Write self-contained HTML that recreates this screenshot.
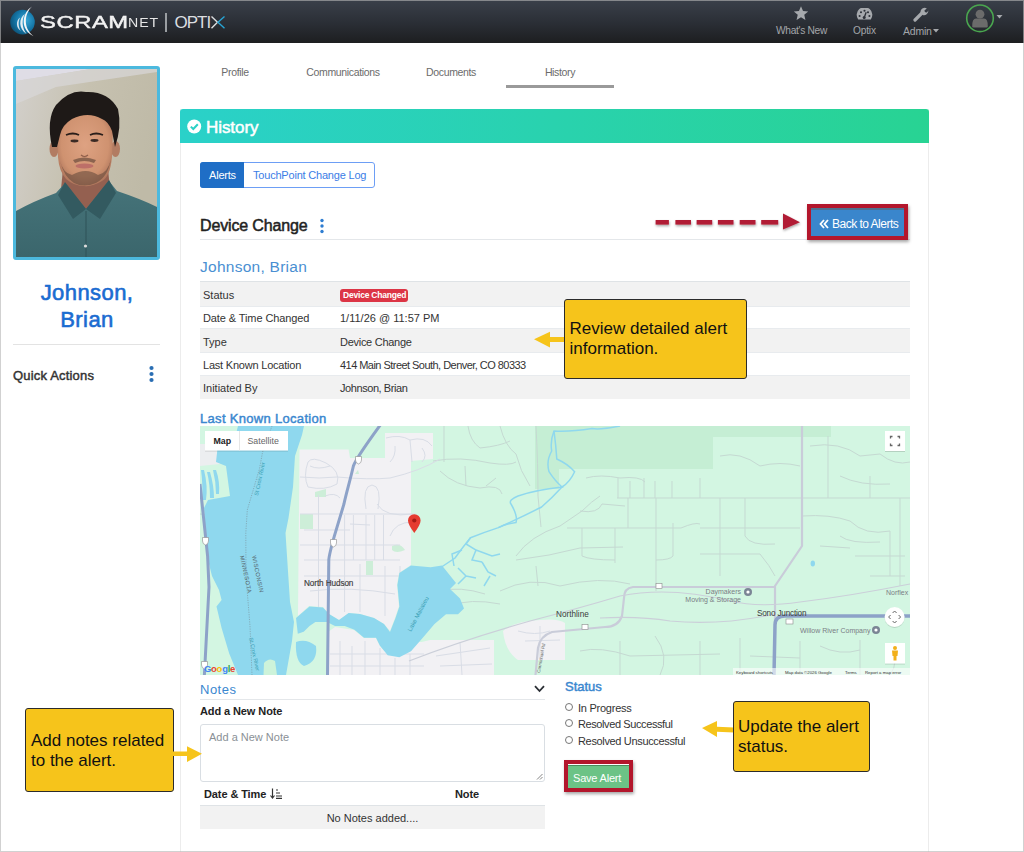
<!DOCTYPE html>
<html><head><meta charset="utf-8">
<style>
*{margin:0;padding:0;box-sizing:border-box}
html,body{width:1024px;height:852px;overflow:hidden;background:#fff;font-family:"Liberation Sans",sans-serif;position:relative}
.a{position:absolute;white-space:nowrap}
#frame{position:absolute;left:0;top:0;width:1024px;height:852px;border:1px solid rgba(180,180,180,0.62);z-index:50}
#hdr{left:0;top:0;width:1024px;height:43px;background:linear-gradient(#3a404a,#2a2e35 55%,#1d1e20)}
.nav{color:#a3a6aa;font-size:11px;line-height:12px}
.tab{color:#6b6b6b;font-size:10.5px;line-height:12px;text-align:center;width:108px;letter-spacing:-0.35px}
.panel{left:180px;top:109px;width:749px;height:760px;border-left:1px solid #ececec;border-right:1px solid #ececec}
.yel{background:#f6c41b;border:1.5px solid #2b2b2b;border-radius:3px;color:#111;font-size:17px;line-height:19.5px;white-space:normal}
.row{position:absolute;left:200px;width:710px;height:23.5px}
.g{background:#f2f2f2}
.lbl{position:absolute;font-size:11px;line-height:12px;color:#333;white-space:nowrap}
.blue{color:#3a87cf}
</style></head><body>
<div id="frame"></div>

<!-- HEADER -->
<div class="a" id="hdr"></div>
<svg class="a" style="left:8px;top:5px" width="32" height="34" viewBox="0 0 32 34">
 <defs><radialGradient id="gl" cx="0.62" cy="0.42" r="0.7"><stop offset="0" stop-color="#3aa9d8"/><stop offset="0.55" stop-color="#1577a8"/><stop offset="1" stop-color="#0b4d70"/></radialGradient></defs>
 <circle cx="14.5" cy="17.1" r="12.3" fill="url(#gl)"/>
 <path d="M24.2 1.6 C14 7 11.5 25 25.6 31.2 C14.5 23 16.5 8 24.2 1.6 Z" fill="#f4f6f8"/>
 <path d="M17 9 C10.5 13 10.5 24 18.5 29 C13.8 23 13.5 14 17 9 Z" fill="#e6eef3"/>
 <path d="M12.2 12.5 C7.5 15.5 8 23 12.8 25.8 C10.2 22 10 16 12.2 12.5 Z" fill="#d8e6ee"/>
</svg>
<div class="a" style="left:40px;top:13px;font-size:16.5px;line-height:19px;color:#f2f2f2;-webkit-text-stroke:0.45px #f2f2f2;letter-spacing:0.4px;transform:scaleX(1.44);transform-origin:0 0">SCRAM</div>
<div class="a" style="left:128px;top:17px;font-size:12.3px;line-height:13px;color:#e6e6e6;letter-spacing:0.8px;transform:scaleX(1.15);transform-origin:0 0">NET</div>
<div class="a" style="left:165px;top:13px;width:1.6px;height:19px;background:#9a9ea2"></div>
<div class="a" style="left:174.5px;top:13px;font-size:17px;line-height:19px;color:#dcdee0;letter-spacing:-1px">OPTI</div>
<svg class="a" style="left:210px;top:16px" width="16" height="14" viewBox="0 0 16 14">
 <path d="M1.5 0.5 L7.5 6.3 L1.5 12.2" stroke="#dcdee0" stroke-width="1.4" fill="none"/>
 <path d="M14.5 0.5 L8 6.3 L14.5 12.2" stroke="#27a5d6" stroke-width="1.4" fill="none"/>
</svg>

<!-- nav icons -->
<svg class="a" style="left:793px;top:6px" width="16" height="15" viewBox="0 0 24 23">
 <path d="M12 0.5 L15.1 7.6 L23 8.3 L17 13.5 L18.8 21.3 L12 17.2 L5.2 21.3 L7 13.5 L1 8.3 L8.9 7.6 Z" fill="#a6a9ad"/>
</svg>
<div class="a nav" style="left:776px;top:25px;font-size:10.2px;letter-spacing:-0.3px">What's New</div>
<svg class="a" style="left:856px;top:8px" width="17" height="12" viewBox="0 0 17 12">
 <path d="M2.2 11.5 A7.8 7.8 0 1 1 14.8 11.5 Z" fill="#a6a9ad"/>
 <circle cx="3.6" cy="8" r="1.05" fill="#2e3239"/><circle cx="5" cy="4.3" r="1.05" fill="#2e3239"/><circle cx="8.5" cy="2.7" r="1.05" fill="#2e3239"/><circle cx="12" cy="4.3" r="1.05" fill="#2e3239"/><circle cx="13.4" cy="8" r="1.05" fill="#2e3239"/>
 <path d="M8.2 9.5 L10.2 4.2" stroke="#2e3239" stroke-width="1.3"/><circle cx="8.2" cy="9.6" r="1.5" fill="#2e3239"/>
</svg>
<div class="a nav" style="left:853px;top:25px;font-size:10.2px;letter-spacing:-0.2px">Optix</div>
<svg class="a" style="left:913px;top:7px" width="16" height="15" viewBox="0 0 16 15">
 <path d="M2 13 L8.5 6.5" stroke="#a6a9ad" stroke-width="3.2" stroke-linecap="round"/>
 <path d="M7.5 5.5 A4.3 4.3 0 0 1 13.8 1.2 L11.3 3.7 L12.2 5.3 L14 5.6 L15.3 3.6 A4.3 4.3 0 0 1 9.6 8 Z" fill="#a6a9ad"/>
</svg>
<div class="a nav" style="left:903px;top:25px;font-size:10.5px;letter-spacing:-0.2px">Admin</div>
<svg class="a" style="left:933px;top:29px" width="6" height="4"><path d="M0 0 L6 0 L3 3.5 Z" fill="#a6a9ad"/></svg>
<svg class="a" style="left:965px;top:3px" width="40" height="31" viewBox="0 0 40 31">
 <circle cx="15" cy="15.3" r="13.3" fill="none" stroke="#4aa64f" stroke-width="1.6"/>
 <circle cx="15" cy="11.2" r="4.4" fill="#6b6b6b"/>
 <path d="M7.2 23.5 Q7 15.5 11 15.5 L19 15.5 Q23 15.5 22.8 23.5 Q22.8 24.5 21.5 24.5 L8.5 24.5 Q7.2 24.5 7.2 23.5 Z" fill="#6b6b6b"/>
 <path d="M31.5 12 L37.5 12 L34.5 15.5 Z" fill="#a6a9ad"/>
</svg>

<!-- SIDEBAR -->
<div class="a" style="left:13px;top:66px;width:147px;height:194px;border:3px solid #4cb9de;border-radius:3px;background:#c6c1b0;overflow:hidden">
<svg width="141" height="188" viewBox="0 0 141 188" style="display:block">
 <defs>
  <linearGradient id="wall" x1="0" y1="0" x2="1" y2="0.3"><stop offset="0" stop-color="#d3d0cc"/><stop offset="0.5" stop-color="#c6c1b0"/><stop offset="1" stop-color="#bfbaa7"/></linearGradient>
  <radialGradient id="skin" cx="0.5" cy="0.45" r="0.6"><stop offset="0" stop-color="#dea282"/><stop offset="0.7" stop-color="#cf9270"/><stop offset="1" stop-color="#a87058"/></radialGradient>
  <linearGradient id="shirt" x1="0" y1="0" x2="0" y2="1"><stop offset="0" stop-color="#46747a"/><stop offset="1" stop-color="#3b666c"/></linearGradient>
 </defs>
 <rect width="141" height="188" fill="url(#wall)"/>
 <path d="M0 0 L75 0 L0 12 Z" fill="#dfdde6"/>
 <path d="M0 12 L75 0 L141 0 L141 3 L40 18 L0 35 Z" fill="#d9d7d8" opacity="0.7"/>
 <!-- neck -->
 <path d="M47 100 L92 100 L94 120 L70 146 L45 120 Z" fill="#946050"/>
 <!-- shirt -->
 <path d="M0 142 Q18 132 40 124 L49 114 L70 140 L93 112 L101 122 Q125 130 141 138 L141 188 L0 188 Z" fill="url(#shirt)"/>
 <path d="M49 113 L42 126 L57 150 L70 140 Z" fill="#335a60"/>
 <path d="M93 111 L100 124 L84 150 L70 140 Z" fill="#335a60"/>
 <path d="M70 142 L70 188" stroke="#2f5258" stroke-width="1"/>
 <circle cx="69.5" cy="177" r="1.6" fill="#dcdcdc"/>
 <!-- ears -->
 <ellipse cx="38" cy="80" rx="4.5" ry="8" fill="#b27c62"/>
 <ellipse cx="99.5" cy="80" rx="4.5" ry="8" fill="#b27c62"/>
 <!-- face -->
 <path d="M41 62 Q42 42 69 42 Q96 42 97 62 L96 88 Q94 108 86 112 Q76 118 68 117 Q58 117 50 110 Q43 102 42 88 Z" fill="url(#skin)"/>
 <!-- stubble -->
 <path d="M44 92 Q48 108 58 114 Q68 119 80 114 Q92 108 95 90 Q92 104 82 106 Q70 98 56 106 Q47 104 44 92 Z" fill="#5e4638" opacity="0.55"/>
 <path d="M57 91 Q68 86 80 91 L78 94 Q68 90 59 94 Z" fill="#4e382e" opacity="0.55"/>
 <ellipse cx="68.5" cy="97" rx="9" ry="2.6" fill="#bd6f68"/>
 <!-- eyes -->
 <path d="M50 66 Q57 63 63 66" stroke="#2a1e1a" stroke-width="1.8" fill="none"/>
 <path d="M74 66 Q80 63 87 66" stroke="#2a1e1a" stroke-width="1.8" fill="none"/>
 <ellipse cx="58.5" cy="72" rx="4" ry="1.4" fill="#3a2a24"/>
 <ellipse cx="78.5" cy="71.5" rx="4" ry="1.4" fill="#3a2a24"/>
 <path d="M65 86 Q68.5 89 72 86" stroke="#8e5e4a" stroke-width="1.2" fill="none"/>
 <!-- hair -->
 <path d="M36 78 Q30 50 40 36 Q54 20 70 23 Q92 22 102 40 Q106 58 99 78 L96 62 Q92 52 86 50 Q72 42 56 50 Q46 56 44 66 L41 78 Z" fill="#1e1917"/>
</svg>
</div>
<div class="a" style="left:0;top:279px;width:174px;text-align:center;font-size:22px;line-height:27px;color:#1b6cd1;-webkit-text-stroke:0.6px #1b6cd1;letter-spacing:0.42px">Johnson,<br>Brian</div>
<div class="a" style="left:13px;top:344px;width:147px;height:1px;background:#e3e3e3"></div>
<div class="a" style="left:13px;top:368px;font-size:13px;line-height:15px;color:#333;-webkit-text-stroke:0.45px #333;letter-spacing:0.18px">Quick Actions</div>
<svg class="a" style="left:148px;top:365px" width="7" height="18"><circle cx="3.5" cy="3" r="2.1" fill="#2a6eb3"/><circle cx="3.5" cy="9" r="2.1" fill="#2a6eb3"/><circle cx="3.5" cy="15" r="2.1" fill="#2a6eb3"/></svg>

<!-- TABS -->
<div class="a tab" style="left:181px;top:66px">Profile</div>
<div class="a tab" style="left:289px;top:66px">Communications</div>
<div class="a tab" style="left:397px;top:66px">Documents</div>
<div class="a tab" style="left:506px;top:66px">History</div>
<div class="a" style="left:506px;top:85px;width:108px;height:3px;background:#9a9a9a"></div>

<!-- PANEL -->
<div class="a panel"></div>
<div class="a" style="left:180px;top:109px;width:749px;height:34px;background:linear-gradient(90deg,#2ad1c9,#28d393);border-radius:3px 3px 0 0"></div>
<svg class="a" style="left:187px;top:119px" width="15" height="15" viewBox="0 0 15 15"><circle cx="7.2" cy="7.5" r="7" fill="#fff"/><path d="M3.8 7.6 L6.3 10 L10.8 5.2" stroke="#2bd1c6" stroke-width="2" fill="none"/></svg>
<div class="a" style="left:206px;top:118px;font-size:17px;line-height:19px;color:#fff;-webkit-text-stroke:0.5px #fff;letter-spacing:-0.07px">History</div>


<!-- alerts buttons -->
<div class="a" style="left:200px;top:162px;width:175px;height:26px;border:1px solid #6d9ef5;border-radius:3px"></div>
<div class="a" style="left:200px;top:162px;width:44px;height:26px;background:#1f6ec6;border-radius:3px 0 0 3px"></div>
<div class="lbl" style="left:209px;top:169px;color:#fff;letter-spacing:-0.2px">Alerts</div>
<div class="lbl" style="left:253px;top:169px;color:#3b7de6;letter-spacing:-0.2px">TouchPoint Change Log</div>

<!-- device change heading -->
<div class="a" style="left:200px;top:216.5px;font-size:16px;line-height:18px;color:#222;-webkit-text-stroke:0.5px #222;letter-spacing:-0.15px">Device Change</div>
<svg class="a" style="left:319px;top:218px" width="6" height="16"><circle cx="3" cy="2.5" r="1.7" fill="#2e7dd1"/><circle cx="3" cy="8" r="1.7" fill="#2e7dd1"/><circle cx="3" cy="13.5" r="1.7" fill="#2e7dd1"/></svg>
<div class="a" style="left:200px;top:239px;width:710px;height:1px;background:#e4e7ea"></div>

<!-- back to alerts -->
<svg class="a" style="left:650px;top:208px" width="156" height="26" viewBox="0 0 156 26">
 <defs><filter id="sh" x="-10%" y="-30%" width="120%" height="180%"><feDropShadow dx="0.5" dy="1.5" stdDeviation="1" flood-color="#000" flood-opacity="0.35"/></filter></defs>
 <g filter="url(#sh)" fill="#b11d36">
  <rect x="5.6" y="12" width="13.3" height="4.6"/>
  <rect x="25.4" y="12" width="15.6" height="4.6"/>
  <rect x="46.6" y="12" width="15.6" height="4.6"/>
  <rect x="67.9" y="12" width="15.6" height="4.6"/>
  <rect x="89.7" y="12" width="15.8" height="4.6"/>
  <rect x="111.2" y="12" width="17" height="4.6"/>
  <path d="M133 5.4 L150 14.3 L133 21.5 Z"/>
 </g>
</svg>
<div class="a" style="left:807px;top:204px;width:101px;height:35.5px;border:4px solid #b3162c;box-shadow:1px 2px 3px rgba(0,0,0,0.35)"></div>
<div class="a" style="left:811px;top:208px;width:93px;height:27.5px;background:#3a86cc;border-top:2px solid #4d7190"></div>
<svg class="a" style="left:819px;top:219px" width="10" height="10" viewBox="0 0 10 10"><path d="M5 1 L1.5 5 L5 9 M9 1 L5.5 5 L9 9" stroke="#fff" stroke-width="1.8" fill="none"/></svg>
<div class="a" style="left:832px;top:217px;font-size:12px;line-height:14px;color:#fff;letter-spacing:-0.51px">Back to Alerts</div>

<!-- name -->
<div class="a" style="left:200px;top:258px;font-size:15.5px;line-height:18px;color:#4a8fd2;letter-spacing:0.26px">Johnson, Brian</div>

<!-- table -->
<div class="a" style="left:200px;top:281px;width:710px;height:1px;background:#dfe3e6"></div>
<div class="row g" style="top:282px;height:24px"></div>
<div class="row g" style="top:328.5px;height:24px"></div>
<div class="row g" style="top:375px;height:23.5px"></div>
<div class="a" style="left:200px;top:305.5px;width:710px;height:1px;background:#e8ebee"></div>
<div class="a" style="left:200px;top:328px;width:710px;height:1px;background:#e8ebee"></div>
<div class="a" style="left:200px;top:352px;width:710px;height:1px;background:#e8ebee"></div>
<div class="a" style="left:200px;top:374.5px;width:710px;height:1px;background:#e8ebee"></div>
<div class="lbl" style="left:203px;top:289px">Status</div>
<div class="lbl" style="left:203px;top:312px;letter-spacing:-0.1px">Date &amp; Time Changed</div>
<div class="lbl" style="left:203px;top:335.5px">Type</div>
<div class="lbl" style="left:203px;top:359px;letter-spacing:-0.21px">Last Known Location</div>
<div class="lbl" style="left:203px;top:382px">Initiated By</div>
<div class="a" style="left:340px;top:289px;width:68px;height:12.5px;background:#dc3545;border-radius:3px"></div>
<div class="a" style="left:343px;top:290px;font-size:8.5px;line-height:11px;color:#fff;font-weight:bold;letter-spacing:-0.2px">Device Changed</div>
<div class="lbl" style="left:340px;top:312px">1/11/26 @ 11:57 PM</div>
<div class="lbl" style="left:340px;top:335.5px;letter-spacing:-0.28px">Device Change</div>
<div class="lbl" style="left:340px;top:359px;letter-spacing:-0.54px">414 Main Street South, Denver, CO 80333</div>
<div class="lbl" style="left:340px;top:382px;letter-spacing:-0.43px">Johnson, Brian</div>

<!-- callout 1 -->
<svg class="a" style="left:532px;top:330px" width="34" height="20" viewBox="0 0 34 20"><path d="M2 9.2 L18 1.7 L18 7 L33 7 L33 12 L18 12 L18 17.4 Z" fill="#f6c41b"/></svg>
<div class="a yel" style="left:564px;top:299px;width:183px;height:80px;padding:19px 0 0 4.5px">Review detailed alert information.</div>

<!-- last known location -->
<div class="a" style="left:200px;top:411px;font-size:13px;line-height:15px;color:#3a87cf;-webkit-text-stroke:0.45px #3a87cf;letter-spacing:0.31px">Last Known Location</div>

<!--MAP-->
<svg class="a" style="left:200px;top:426px" width="710" height="249" viewBox="0 0 710 249">
 <defs><filter id="msh" x="-20%" y="-20%" width="140%" height="150%"><feDropShadow dx="0" dy="0.6" stdDeviation="0.6" flood-color="#000" flood-opacity="0.25"/></filter></defs>
 <rect width="710" height="249" fill="#d3f6e2"/>
 <!-- dark green patches -->
 <path d="M335 0 L513 0 L513 43 L359 43 L359 63 L335 63 Z" fill="#c5eed4"/>
 <rect x="513" y="0" width="118" height="11" fill="#c5eed4"/>
 
 <!-- faint green-area roads -->
 <g stroke="#c5d9d2" stroke-width="1" fill="none">
  <path d="M233 35 Q260 30 290 37 Q310 40 316 36 M244 0 L244 36 M268 0 Q270 15 280 22 Q300 20 310 15 M300 0 Q305 20 316 28 Q320 45 330 60"/>
  <path d="M240 45 Q255 60 280 62 Q300 58 302 68 M286 60 L296 52 M265 40 L266 60"/>
  <path d="M336 0 Q338 40 338 70 L341 101 M316 130 Q330 110 360 100 L382 85 Q392 75 400 70"/>
  <path d="M386 52 Q400 48 420 52 Q440 50 445 56 M417 72 L710 72 M418 52 L418 72 M430 55 L430 72 M444 52 L444 72 M455 55 L455 72 M472 55 L472 72"/>
  <path d="M367 102 L481 102 Q495 96 500 98 M428 72 L428 102 M456 72 L456 165 M473 97 L473 130 Q470 134 456 134 M415 102 L415 137 M382 102 L382 130 Q390 134 415 134"/>
  <path d="M316 134 Q350 130 380 122 L423 121 M300 165 Q330 150 360 160 Q400 150 430 158 M336 140 L338 160"/>
  <path d="M380 85 Q398 88 402 78 L425 80"/>
  <path d="M500 52 L500 72 M520 30 Q540 25 560 40 Q580 35 600 40 M520 72 L520 150 M545 72 L545 110 Q550 120 575 118 M500 102 L600 102 M500 128 L560 128 Q570 140 575 150"/>
  <path d="M610 20 Q640 15 660 30 L680 28 Q695 40 710 36 M628 10 L628 72 M640 50 Q660 60 690 58 M670 50 L670 72"/>
  <path d="M602 90 Q630 88 650 95 Q665 110 690 105 L690 150 M640 110 Q650 118 680 116 M655 130 L705 130 M670 150 L705 150 M700 72 L700 160 M620 120 L650 122"/>
  <path d="M250 180 Q270 172 300 178 M240 165 Q260 160 285 168"/>
  <path d="M420 215 L420 249 M455 210 Q470 230 460 249 M500 215 L500 249 M540 212 L540 249 M600 215 L600 249 M620 220 Q640 230 660 224 M660 214 L660 249 M690 220 Q700 235 690 249 M380 225 Q400 220 430 230 L520 228 M550 230 L600 232"/>
  <path d="M0 88 Q10 90 20 85 M14 96 Q20 100 30 96"/>
 </g>
 <!-- urban -->
 <path d="M99.5 23.5 L148.6 23.5 L150 32 L185 32 L185 7 L233 7 L233 33 L211 35 L211 139 L199 147 L197 159 L199 180 L195 192 L190 205 L184 198 L174 192 L160 188 L149 187 L139 194 L129 188 L123 181 L109 180 L98 190 Z" fill="#f2f1f4"/>
 <path d="M0 18 L16 18 L20 38 L0 40 Z" fill="#eceef0"/>
 <path d="M128 206 L135 201 L154 204 L164 212 L176 212 L180 220 L188 229 L200 231 L211 225 L218 216 L226 216 L226 249 L128 249 Z" fill="#f2f1f4"/>
 <path d="M180 226 L230 214 L294 214 L294 249 L180 249 Z" fill="#f2f1f4"/>
 <path d="M303 205 Q315 195 340 194 Q358 192 365 197 L365 234 L318 234 Q305 225 303 205 Z" fill="#f2f1f4"/>
 <!-- small green parks in urban -->
 <path d="M115 66 L126 63 L126 71 L115 71 Z" fill="#cdeed8"/>
 <rect x="100" y="88" width="13" height="15" fill="#cdeed8"/>
 <rect x="166" y="135" width="7" height="14" fill="#cdeed8"/>
 <path d="M192 120 Q200 116 205 124 Q196 128 192 124 Z" fill="#cdeed8"/>
 <path d="M155 48 L158 44 L159 48 Z" fill="#cdeed8"/>
 <!-- urban roads texture -->
 <g stroke="#d9dde6" stroke-width="1" fill="none">
  <path d="M108 36 Q103 50 108 61 Q125 65 137 58 Q141 45 126 37 Q112 30 108 36 M110 40 Q118 44 130 40"/>
  <path d="M100 51 Q120 53 137 51 Q170 54 190 52 Q220 45 240 33"/>
  <path d="M186 12 Q200 8 210 14 Q225 10 232 20 M195 20 Q196 30 190 36 M210 14 L212 36 M222 22 Q228 30 222 36"/>
  <path d="M100 88 L216 88 M100 119 L200 119 M104 104 L150 104 M150 98 L170 99"/>
  <path d="M118.5 69 L118.5 182 M144.6 89 L144.6 186 M153.4 89 L153.4 134 M166 89 L166 134 M174.7 89 L174.7 134 M183.5 89 L183.5 134"/>
  <path d="M166 83 Q162 60 172 59 Q182 60 178 83 M177 78 Q185 92 213 88 M190 110 Q195 96 213 96 M125 70 Q135 66 140 72"/>
  <path d="M104 134 L200 134 M104 150 L200 150 M110 165 Q150 160 195 168 M128 140 L128 180 M160 138 L160 186 M185 140 L185 190 M200 140 L200 180"/>
  <path d="M140 215 L140 249 M152 220 L152 249 M165 215 L165 249 M180 222 L180 249 M195 232 L195 249 M210 228 L210 249 M130 228 L224 228 M130 240 L224 240"/>
  <path d="M236 230 L290 222 M240 240 L292 238 M260 216 L262 249 M318 205 Q335 210 350 205 M325 215 L360 214 M340 200 L340 232"/>
 </g>
 <!-- river left -->
 <path d="M38 0 L104 0 L102 9 L95 30 L93 61 L88.5 92 L85.5 107 L87 130 L90 176 L91.4 183 L94 196 L92 215 L86 249 L38 249 L29.2 227.5 L21.6 202 L16.5 180.5 L21.6 174 L19 164 L12 150 L7 130 L4 82 L8 74 L30 70 L26 40 L16 36 L18 18 L36 8 Z" fill="#8fd8ee"/>
 <path d="M63.5 249 L64 237 Q69 231 75 235 L77 249 Z" fill="#cdf3da"/>
 <path d="M72 0 L62.6 26 L59.5 42.7 L47.3 84 L45.8 107 L46 150 L50 200 L52 249" stroke="#7d9aa5" stroke-width="0.7" stroke-dasharray="1.2 1.2" fill="none"/>
 <path d="M4 44 Q8 60 6 74 L2 74 Q3 58 1 44 Z M10 46 Q14 60 14 72 L10 72 Q10 58 7 46 Z M16 44 Q20 55 19 68 L16 68 Q16 56 13 44 Z" fill="#8fd8ee"/>
 <!-- lake -->
 <path d="M96 192 L109.5 180.4 L123 181.4 L129 188 L139 194 L148.6 187 L160 188 L174 192 L184 198 L190 206 L195.5 192 L199.4 180.4 L197.4 159 L199.4 147 L211 139.4 L230.6 141.3 L242 139.4 L256 157 L250 163 L260 172.6 L264 182.4 L258 188.2 L246 188.2 L234.5 198 L222.8 211.7 L211 225.3 L199.4 231.2 L187.7 229.2 L179.8 219.5 L176 211.7 L164 211.7 L154.5 203.8 L144.7 200 L135 200 L127 196 L115.4 196 L109.5 200 L103.7 205.8 L97.8 207.75 Z" fill="#8fd8ee"/>
 <path d="M96 216 Q106 212 116 220 Q118 236 104 240 Q95 236 96 216 Z" fill="#8fd8ee"/>
 <!-- delta river -->
 <g stroke="#8fd8ee" stroke-width="1.5" fill="none">
  <path d="M420 0 Q400 4 392 2.5 Q370 6 354 5 Q350 15 351.7 25 Q346 35 349 45.7 Q355 55 362 61 Q335 64 318 70 Q308 74 311 78 Q318 90 316 96.5 Q305 98 298.4 101.6 Q285 106 270.5 111.7 Q262 122 255 132 L240 142"/>
  <path d="M354 5 Q356 20 356.8 33 Q368 38 374.6 45.7 Q370 56 362 61 Q352 72 341.6 81 Q320 92 298.4 101.6"/>
  <path d="M270.5 111.7 L266 118 L276 124 L272 134 L282 136 M262 124 L252 128 L254 140 M276 124 L292 130 L300 128 M282 136 L288 146 L296 150 M258 142 L266 150 L258 158 M290 150 L284 160 M266 150 L276 152"/>
 </g>
 <!-- gray roads -->
 <g stroke="#c9ccd9" stroke-width="2.2" fill="none">
  <path d="M602 0 L602 120 L575 160 L575 199"/>
  <path d="M575 161 L433 161 Q424 162 424 172 L422 190 Q418 201 405 201 L352 206 Q340 210 338 222 L335.5 249"/>
 </g>
 <g stroke="#cbcfd9" stroke-width="1.2" fill="none">
  <path d="M209 235 Q260 215 330 195 Q380 182 420 170 Q470 160 530 175 Q560 182 600 176 Q650 170 710 158"/>
  <path d="M400 192 Q440 190 470 195 Q520 200 575 188"/>
 </g>
 <!-- highways -->
 <g stroke="#8da2c8" stroke-width="3" fill="none">
  <path d="M180.3 -1 C165 20 155 35 153.4 40 C150 55 146 68 143.9 78.2 L134.4 109.9 C131 122 129 130 128.8 134 L127.5 249"/>
  <path d="M0 58 L7.6 130 L9 161 L4.4 249"/>
 </g>
 <path d="M574 249 L575 199 Q575 190 585 190 L710 190" stroke="#8da2c8" stroke-width="3.5" fill="none"/>
 <!-- shields -->
 <g fill="#fff" stroke="#8a8a8a" stroke-width="0.6">
  <path d="M155.5 30.5 L161.5 30.5 L161.5 34 Q161.5 37 158.5 38 Q155.5 37 155.5 34 Z"/>
  <path d="M130.5 113.5 L136.5 113.5 L136.5 117 Q136.5 120 133.5 121 Q130.5 120 130.5 117 Z"/>
  <path d="M2.5 111.5 L8.5 111.5 L8.5 115 Q8.5 118 5.5 119 Q2.5 118 2.5 115 Z"/>
  <path d="M1.5 235.5 L7.5 235.5 L7.5 239 Q7.5 242 4.5 243 Q1.5 242 1.5 239 Z"/>
  <rect x="456" y="157.5" width="6" height="5"/>
  <rect x="382" y="198.5" width="6" height="5"/>
  <rect x="586" y="193" width="7" height="5"/>
 </g>
 <ellipse cx="612.8" cy="137.5" rx="2.2" ry="3" fill="#8fd8ee"/>
 <!-- labels -->
 <g font-family="Liberation Sans, sans-serif" font-size="8.2" fill="#3c3c3c">
  <text x="104" y="159.5" letter-spacing="-0.1" stroke="#3c3c3c" stroke-width="0.15">North Hudson</text>
  <text x="356" y="191">Northline</text>
  <text x="557" y="189.5" letter-spacing="-0.2">Sono Junction</text>
 </g>
 <g font-family="Liberation Sans, sans-serif" font-size="7" fill="#7a7d85">
  <text x="541" y="168" text-anchor="end">Daymakers</text>
  <text x="541" y="175.5" text-anchor="end">Moving &amp; Storage</text>
  <text x="600" y="207">Willow River Company</text>
  <text x="686" y="169">Norflex</text>
 </g>
 <g font-family="Liberation Sans, sans-serif" font-size="5.8" fill="#55656b" letter-spacing="0.5">
  <text transform="translate(52,130) rotate(78)">WISCONSIN</text>
  <text transform="translate(40,130) rotate(78)">MINNESOTA</text>
 </g>
 <g font-family="Liberation Sans, sans-serif" font-size="5.5" fill="#3a9fb5">
  <text transform="translate(58,70) rotate(-78)">St Croix River</text>
  <text transform="translate(49,212) rotate(78)">St Croix River</text>
  <text transform="translate(211,206) rotate(-62)" font-size="6">Lake Mallalieu</text>
  <text transform="translate(340,247) rotate(-80)" font-size="4.5" fill="#666">Carmichael Rd</text>
 </g>
 <!-- pois -->
 <circle cx="548" cy="166" r="4" fill="#7b8595"/><circle cx="548" cy="166" r="1.6" fill="#fff"/>
 <circle cx="676" cy="204" r="4" fill="#7b8595"/><circle cx="676" cy="204" r="1.6" fill="#fff"/>
 <!-- pin -->
 <path d="M214.3 107 Q208 98.5 208 94.5 A6.3 6.3 0 1 1 220.6 94.5 Q220.6 98.5 214.3 107 Z" fill="#e53b30"/>
 <circle cx="214.3" cy="94.5" r="2.1" fill="#a51b16"/>
 <!-- controls -->
 <rect x="5" y="5" width="83" height="19.5" fill="#fff" filter="url(#msh)"/>
 <line x1="39.5" y1="5" x2="39.5" y2="24.5" stroke="#e6e6e6" stroke-width="1"/>
 <text x="13.5" y="18" font-family="Liberation Sans, sans-serif" font-size="8.8" font-weight="bold" fill="#222">Map</text>
 <text x="47.5" y="18" font-family="Liberation Sans, sans-serif" font-size="8.8" fill="#666">Satellite</text>
 <rect x="685" y="5" width="20" height="20" fill="#fff" filter="url(#msh)"/>
 <path d="M690.5 12.5 L690.5 10.5 L692.5 10.5 M697.5 10.5 L699.5 10.5 L699.5 12.5 M699.5 17.5 L699.5 19.5 L697.5 19.5 M692.5 19.5 L690.5 19.5 L690.5 17.5" stroke="#666" stroke-width="1.3" fill="none"/>
 <circle cx="694.6" cy="191" r="10" fill="#fff" filter="url(#msh)"/>
 <path d="M694.6 185 L692.6 187 M694.6 185 L696.6 187 M694.6 197 L692.6 195 M694.6 197 L696.6 195 M688.6 191 L690.6 189 M688.6 191 L690.6 193 M700.6 191 L698.6 189 M700.6 191 L698.6 193" stroke="#666" stroke-width="1"/>
 <rect x="685" y="217" width="20" height="20.5" fill="#fff" filter="url(#msh)"/>
 <circle cx="695" cy="222" r="2" fill="#f2b01b"/>
 <path d="M692 224.5 L698 224.5 L697.5 230 L696.5 230 L696.5 234.5 L693.5 234.5 L693.5 230 L692.5 230 Z" fill="#f2b01b"/>
 <rect x="533" y="242" width="177" height="7" fill="#fff" opacity="0.6"/>
 <g font-family="Liberation Sans, sans-serif" font-size="4.3" fill="#333">
  <text x="536" y="247.5">Keyboard shortcuts</text>
  <text x="585" y="247.5">Map data ©2026 Google</text>
  <text x="645" y="247.5">Terms</text>
  <text x="665" y="247.5">Report a map error</text>
 </g>
 <text x="4" y="246" font-family="Liberation Sans, sans-serif" font-size="9.5" font-weight="bold" letter-spacing="-0.3"><tspan fill="#4285f4">G</tspan><tspan fill="#ea4335">o</tspan><tspan fill="#fbbc05">o</tspan><tspan fill="#4285f4">g</tspan><tspan fill="#34a853">l</tspan><tspan fill="#ea4335">e</tspan></text>
</svg>
<!--ENDMAP-->

<!-- notes -->
<div class="a" style="left:200px;top:682px;font-size:13px;line-height:15px;color:#3a87cf;letter-spacing:0.5px">Notes</div>
<svg class="a" style="left:534px;top:685px" width="11" height="8"><path d="M1 1.2 L5.5 6 L10 1.2" stroke="#2b2f35" stroke-width="1.8" fill="none"/></svg>
<div class="a" style="left:200px;top:699px;width:345px;height:1px;background:#e4e7ea"></div>
<div class="a" style="left:200px;top:705px;font-size:11px;line-height:12px;color:#222;font-weight:bold;letter-spacing:-0.1px">Add a New Note</div>
<div class="a" style="left:200px;top:724px;width:345px;height:58px;border:1px solid #d9dee3;border-radius:3px"></div>
<div class="lbl" style="left:209px;top:731px;color:#8a9096">Add a New Note</div>
<svg class="a" style="left:536px;top:773px" width="7" height="7"><path d="M6.5 1 L1 6.5 M6.5 4 L4 6.5" stroke="#777" stroke-width="0.9"/></svg>
<div class="a" style="left:204px;top:788px;font-size:11px;line-height:12px;color:#222;font-weight:bold;letter-spacing:-0.1px">Date &amp; Time</div>
<svg class="a" style="left:270px;top:788px" width="13" height="11" viewBox="0 0 13 11"><path d="M2.5 0.5 L2.5 9.5 M0.5 7.5 L2.5 10 L4.5 7.5" stroke="#333" stroke-width="1.2" fill="none"/><path d="M6 2 L8 2 M6 5 L10 5 M6 8 L12 8 M6 10.3 L12 10.3" stroke="#333" stroke-width="1.2"/></svg>
<div class="a" style="left:455px;top:788px;font-size:11px;line-height:12px;color:#222;font-weight:bold;letter-spacing:-0.1px">Note</div>
<div class="a" style="left:200px;top:805px;width:345px;height:23.5px;background:#f2f2f2;border-top:1px solid #dfe3e6"></div>
<div class="lbl" style="left:200px;top:812px;width:345px;text-align:center">No Notes added....</div>

<!-- callout notes -->
<div class="a yel" style="left:25px;top:708px;width:149px;height:84px;padding:22px 0 0 5px">Add notes related to the alert.</div>
<svg class="a" style="left:172px;top:745px" width="32" height="18" viewBox="0 0 32 18"><path d="M1 6.5 L15 6.5 L15 1.2 L30 8.7 L15 17 L15 11 L1 11 Z" fill="#f6c41b"/></svg>

<!-- status -->
<div class="a" style="left:565px;top:679px;font-size:13px;line-height:15px;color:#3a87cf;-webkit-text-stroke:0.45px #3a87cf;letter-spacing:0px">Status</div>
<div class="a" style="left:565px;top:703px;width:8px;height:8px;border:1px solid #777;border-radius:50%"></div>
<div class="a" style="left:565px;top:719px;width:8px;height:8px;border:1px solid #777;border-radius:50%"></div>
<div class="a" style="left:565px;top:735.5px;width:8px;height:8px;border:1px solid #777;border-radius:50%"></div>
<div class="lbl" style="left:578px;top:702px;letter-spacing:-0.25px">In Progress</div>
<div class="lbl" style="left:578px;top:718px;letter-spacing:-0.4px">Resolved Successful</div>
<div class="lbl" style="left:578px;top:734.5px;letter-spacing:-0.34px">Resolved Unsuccessful</div>
<div class="a" style="left:564px;top:760px;width:69px;height:32px;border:4px solid #b3162c;box-shadow:1px 2px 3px rgba(0,0,0,0.35)"></div>
<div class="a" style="left:568px;top:765px;width:61px;height:23px;background:#6cc386;border-top:1.5px solid #4a8a5c"></div>
<div class="a" style="left:573px;top:772px;font-size:11px;line-height:12px;color:#fff;letter-spacing:-0.2px">Save Alert</div>

<!-- callout status -->
<svg class="a" style="left:700px;top:719px" width="36" height="20" viewBox="0 0 36 20"><path d="M2 9 L17 2 L17 7.7 L34 8.6 L34 13.6 L17 12.8 L17 18 Z" fill="#f6c41b"/></svg>
<div class="a yel" style="left:733px;top:701px;width:137px;height:71px;padding:15px 0 0 4px">Update the alert status.</div>

</body></html>
